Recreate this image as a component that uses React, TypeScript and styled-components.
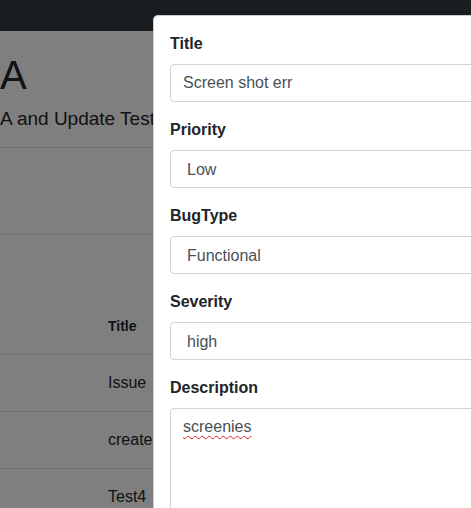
import React from "react";
import styled, { createGlobalStyle } from "styled-components";

const GlobalStyle = createGlobalStyle`
  html, body {
    margin: 0;
    padding: 0;
    overflow: hidden;
    height: 100%;
    background: #fff;
  }
  body {
    font-family: "Liberation Sans", Arial, sans-serif;
    color: #212529;
    font-size: 16px;
    line-height: 1.5;
  }
  * {
    box-sizing: border-box;
  }
`;

const Screen = styled.div`
  position: relative;
  width: 471px;
  height: 508px;
  overflow: hidden;
`;

const Navbar = styled.nav`
  height: 31px;
  background: #343a40;
`;

const Content = styled.main`
  padding: 20px 0 0 0;
`;

const Heading = styled.h1`
  margin: 0 0 6px;
  font-size: 40px;
  font-weight: 400;
  line-height: 1.2;
`;

const Lead = styled.p`
  margin: 0 0 13.5px;
  font-size: 19px;
  line-height: 1.5;
  white-space: nowrap;
`;

const Divider = styled.hr`
  margin: 0;
  border: 0;
  border-top: 1px solid rgba(0, 0, 0, 0.12);
`;

const Toolbar = styled.div`
  height: 86px;
`;

const Table = styled.div`
  margin-top: 63px;
`;

const Row = styled.div<{ $head?: boolean }>`
  display: grid;
  grid-template-columns: 96px 1fr;
  align-items: center;
  height: 57px;
  border-bottom: 1px solid rgba(0, 0, 0, 0.12);
  font-size: ${(p) => (p.$head ? "14px" : "16px")};
  font-weight: ${(p) => (p.$head ? 700 : 400)};
`;

const Cell = styled.div`
  padding: 0 12px;
  white-space: nowrap;
`;

const Backdrop = styled.div`
  position: absolute;
  inset: 0;
  background: rgba(0, 0, 0, 0.5);
`;

const Modal = styled.div`
  position: absolute;
  left: 153px;
  top: 15px;
  width: 500px;
  height: 620px;
  background: #fff;
  border: 1px solid rgba(0, 0, 0, 0.2);
  border-radius: 5px;
`;

const ModalBody = styled.form`
  padding: 16px;
`;

const Group = styled.div`
  margin-bottom: 16px;
`;

const Label = styled.label`
  display: block;
  margin-bottom: 8px;
  font-size: 16px;
  font-weight: 700;
  line-height: 24px;
  color: #212529;
`;

const fieldCss = `
  display: block;
  width: 100%;
  height: 38px;
  padding: 6px 12px;
  font-family: "Liberation Sans", Arial, sans-serif;
  font-size: 16px;
  line-height: 24px;
  color: #495057;
  background: #fff;
  border: 1px solid #ced4da;
  border-radius: 4px;
  outline: none;
`;

const Input = styled.input`
  ${fieldCss}
`;

const Select = styled.div`
  ${fieldCss}
  padding: 7px 12px 5px 16px;
`;

const TextArea = styled.div`
  ${fieldCss}
  height: 140px;
`;

const Misspelled = styled.span`
  text-decoration: underline wavy #e02020;
  text-decoration-thickness: 1px;
  text-underline-offset: 3px;
`;

const rows = ["Issue", "create", "Test4"];

const fields = [
  { label: "Priority", value: "Low" },
  { label: "BugType", value: "Functional" },
  { label: "Severity", value: "high" },
];

export default function App() {
  return (
    <Screen>
      <GlobalStyle />
      <Navbar />
      <Content>
        <Heading>A</Heading>
        <Lead>A and Update Test</Lead>
        <Divider />
        <Toolbar />
        <Divider />
        <Table>
          <Row $head>
            <Cell />
            <Cell>Title</Cell>
          </Row>
          {rows.map((r) => (
            <Row key={r}>
              <Cell />
              <Cell>{r}</Cell>
            </Row>
          ))}
        </Table>
      </Content>
      <Backdrop />
      <Modal>
        <ModalBody>
          <Group>
            <Label>Title</Label>
            <Input defaultValue="Screen shot err" />
          </Group>
          {fields.map((f) => (
            <Group key={f.label}>
              <Label>{f.label}</Label>
              <Select>{f.value}</Select>
            </Group>
          ))}
          <Group>
            <Label>Description</Label>
            <TextArea>
              <Misspelled>screenies</Misspelled>
            </TextArea>
          </Group>
        </ModalBody>
      </Modal>
    </Screen>
  );
}
